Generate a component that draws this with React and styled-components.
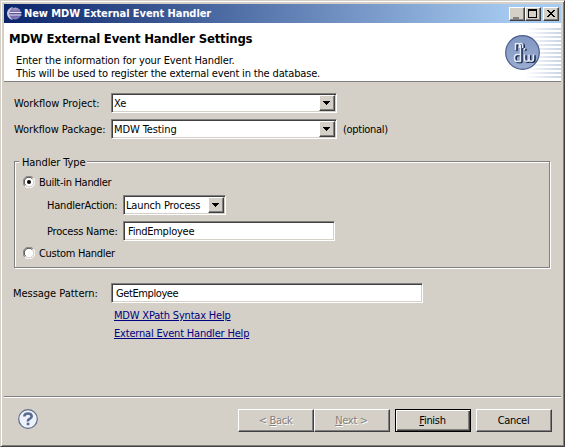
import React from "react";
import styled, { createGlobalStyle, css } from "styled-components";

const face = "#d4d0c8";

const GlobalStyle = createGlobalStyle`
  *, *::before, *::after { box-sizing: border-box; }
  body {
    margin: 0;
    overflow: hidden;
    background: ${face};
    color: #000;
    font: 11px/14px "DejaVu Sans Condensed", "DejaVu Sans", sans-serif;
  }
`;

const Window = styled.div`
  width: 565px;
  height: 447px;
  padding: 2px;
  display: flex;
  flex-direction: column;
  border: 1px solid;
  border-color: ${face} #404040 #404040 ${face};
  box-shadow: inset 1px 1px #fff, inset -1px -1px #808080;
  background: ${face};
`;

const TitleBar = styled.header`
  display: flex;
  align-items: center;
  height: 19px;
  margin: 1px 1px 0;
  padding: 0 2px 0 3px;
  background: linear-gradient(90deg, #0a246a, #a6caf0 92%);
`;

const Text = styled.span`
  display: block;
  white-space: pre;
  letter-spacing: ${(p) => p.$track || 0}px;
`;

const TitleText = styled(Text)`
  flex: 1;
  margin-left: 2px;
  color: #fff;
  font-weight: bold;
`;

const raised = css`
  border: 1px solid;
  border-color: #fff #404040 #404040 #fff;
  box-shadow: inset -1px -1px #808080;
  background: ${face};
`;

const CaptionButton = styled.button`
  ${raised}
  display: flex;
  width: 16px;
  height: 14px;
  padding: 0;
  margin-left: ${(p) => (p.$gap ? 2 : 0)}px;
  svg { display: block; }
`;

const Banner = styled.section`
  display: flex;
  justify-content: space-between;
  height: 59px;
  margin: 0 1px;
  background: #fff;
  border-bottom: 1px solid #808080;
`;

const BannerCopy = styled.div`
  padding: 8px 0 0 5px;
`;

const Heading = styled.h1`
  margin: 0 0 7px;
  font-size: 13px;
  line-height: 16px;
  font-weight: bold;
`;

const Description = styled.div`
  padding-left: 7px;
  line-height: 13px;
`;

const Form = styled.main`
  flex: 1;
  padding: 11px 11px 0 10px;
`;

const Row = styled.div`
  display: flex;
  align-items: center;
  height: 20px;
  margin-bottom: ${(p) => p.$after || 0}px;
`;

const Label = styled.label`
  width: ${(p) => p.$width}px;
  padding: 2px 0 0 ${(p) => p.$inset || 0}px;
  flex: none;
`;

const sunken = css`
  border: 1px solid;
  border-color: #808080 #fff #fff #808080;
  box-shadow: inset 1px 1px #404040, inset -1px -1px ${face};
  background-color: #fff;
`;

const Select = styled.div`
  ${sunken}
  display: flex;
  align-items: center;
  justify-content: space-between;
  width: ${(p) => p.$width}px;
  height: 20px;
  padding: 1px 1px 1px 2px;
  ${Text} { padding-top: 2px; }
`;

const DropButton = styled.span`
  ${raised}
  display: flex;
  align-items: center;
  justify-content: center;
  width: 16px;
  height: 16px;
  padding: 0 1px 1px 0;
`;

const Field = styled.div`
  ${sunken}
  display: flex;
  align-items: center;
  width: ${(p) => p.$width}px;
  height: 20px;
  padding: 1px 4px 0;
`;

const Hint = styled.div`
  margin-left: 6px;
  padding-top: 2px;
`;

const Group = styled.fieldset`
  margin: 0 1px 15px;
  height: 114px;
  min-width: 0;
  padding: 0 0 0 8px;
  border: 1px solid #808080;
  box-shadow: 1px 1px #fff, inset 1px 1px #fff;
`;

const Legend = styled.legend`
  height: 14px;
  margin-left: -4px;
  padding: 2px 2px 0 3px;
  background: ${face};
`;

const RadioRow = styled.div`
  display: flex;
  align-items: center;
  gap: 4px;
  height: 14px;
  margin-top: ${(p) => p.$before || 0}px;
  ${Text} { padding-top: 1px; }
`;

const Nested = styled.div`
  padding: 6px 0 5px 24px;
`;

const Links = styled.nav`
  display: flex;
  flex-direction: column;
  align-items: flex-start;
  gap: 4px;
  padding: 6px 0 0 101px;
`;

const Link = styled.a`
  color: #000080;
  text-decoration: underline;
  text-underline-offset: 1px;
  white-space: pre;
  letter-spacing: ${(p) => p.$track || 0}px;
`;

const Footer = styled.footer`
  display: flex;
  align-items: flex-start;
  height: 48px;
  margin: 0 1px;
  padding: 12px 9px 0 14px;
  border-top: 1px solid #808080;
  box-shadow: inset 0 1px #fff;
`;

const Actions = styled.div`
  display: flex;
  gap: 5px;
  margin-left: auto;
`;

const Pair = styled.div`
  display: flex;
`;

const Button = styled.button`
  ${raised}
  width: 76px;
  height: 23px;
  padding: 0 1px 0 0;
  color: #000;
  font: inherit;
  letter-spacing: -0.3px;
  ${(p) => p.disabled && css`
    color: #808080;
    text-shadow: 1px 1px #fff;
  `}
  ${(p) => p.$primary && css`
    border-color: #000;
    box-shadow: inset 1px 1px #fff, inset -1px -1px #404040, inset -2px -2px #808080;
  `}
`;

const Arrow = () => (
  <DropButton>
    <svg width="7" height="4" shapeRendering="crispEdges">
      <path d="M0 0h7v1h-1v1h-1v1h-1v1h-1v-1h-1v-1h-1v-1h-1z" />
    </svg>
  </DropButton>
);

const Radio = ({ checked }) => (
  <svg width="12" height="12" viewBox="0 0 12 12">
    <circle cx="6" cy="6" r="5" fill="#fff" />
    <path d="M1.8 10.2A5.5 5.5 0 0 1 10.2 1.8" fill="none" stroke="#808080" />
    <path d="M10.2 1.8A5.5 5.5 0 0 1 1.8 10.2" fill="none" stroke="#fff" />
    <path d="M2.6 9.2A4.5 4.5 0 0 1 9.2 2.6" fill="none" stroke="#404040" />
    <path d="M9.4 3A4.5 4.5 0 0 1 3 9.4" fill="none" stroke={face} />
    {checked && <circle cx="6" cy="6" r="2" />}
  </svg>
);

const EclipseIcon = () => (
  <svg width="15" height="15" viewBox="0 0 15 15">
    <defs>
      <linearGradient id="orb" x1="0" x2="0" y1="0" y2="1">
        <stop stopColor="#b3a4ce" />
        <stop offset="0.5" stopColor="#5d559c" />
        <stop offset="1" stopColor="#8b82bb" />
      </linearGradient>
    </defs>
    <path d="M6 1C2.500 1.500 0 4.500 0 7.500S2.500 13.500 6 14C4 12 3 10 3 7.500S4 3 6 1Z" fill="#cfc4df" />
    <circle cx="8.200" cy="7.500" r="5.900" fill="url(#orb)" />
    <path d="M2.500 6.500h12M2.500 9h12" stroke="#e9e5f5" />
  </svg>
);

const stripes = [5, 9, 13, 17, 21, 25, 29, 33, 37, 41, 45, 49, 53];
const monogram =
  "M20.500 27v-7M20.500 21.500q2-2 4 0V25M24.500 21.500q1.500-1.800 3.200 0V25" +
  "M25.500 22V39M25.500 31.500h-3.500q-2.500 0-2.500 3.500t2.500 3.500h3.500" +
  "M29.500 31.500v4.500q0 2.300 2.300 2.300t2.300-2.300V31.500M34.100 36q0 2.300 2.200 2.300t2.200-2.300V31.500M29.500 25v2";

const Brand = () => (
  <svg width="66" height="58" viewBox="0 0 66 58">
    <defs>
      <linearGradient id="fade" gradientUnits="userSpaceOnUse" x1="30" x2="66" y1="0" y2="0">
        <stop stopColor="#c9d3e6" stopOpacity="0" />
        <stop offset="1" stopColor="#c9d3e6" />
      </linearGradient>
      <linearGradient id="disc" x1="0" x2="0" y1="0" y2="1">
        <stop stopColor="#8197c2" />
        <stop offset="1" stopColor="#9bacd0" />
      </linearGradient>
    </defs>
    {stripes.map((y) => (
      <rect key={y} x="30" y={y} width="36" height="2" fill="url(#fade)" />
    ))}
    <circle cx="27.500" cy="29.500" r="16.800" fill="url(#disc)" stroke="#4c5f8c" strokeWidth="1.200" />
    <g fill="none">
      <path d={monogram} stroke="#18264d" strokeWidth="1.900" transform="translate(1.300 .7)" />
      <path d={monogram} stroke="#e3eaf7" strokeWidth="1.500" />
    </g>
  </svg>
);

const HelpIcon = () => (
  <svg width="20" height="20" viewBox="0 0 20 20">
    <circle cx="10" cy="10" r="9.300" fill="#edf2fa" stroke="#5c6c8c" strokeWidth="1.200" />
    <path d="M6.300 7.500Q6.500 4.500 10 4.500T13.700 7.300Q13.700 9 11.700 9.900T10 12.400" fill="none" stroke="#596b91" strokeWidth="2.600" />
    <path d="M8.700 13.700h2.700v2.500H8.700z" fill="#596b91" />
  </svg>
);

export default function App() {
  return (
    <>
      <GlobalStyle />
      <Window>
        <TitleBar>
          <EclipseIcon />
          <TitleText $track={-0.07}>New MDW External Event Handler</TitleText>
          <CaptionButton aria-label="Minimize">
            <svg width="14" height="12"><path d="M3 9h6v2H3z" fill="#808080" /></svg>
          </CaptionButton>
          <CaptionButton aria-label="Maximize">
            <svg width="14" height="12" shapeRendering="crispEdges"><path d="M2 1h9v9H2zM3 3v6h7V3z" fillRule="evenodd" /></svg>
          </CaptionButton>
          <CaptionButton $gap aria-label="Close">
            <svg width="14" height="12" shapeRendering="crispEdges"><path d="M3 2h2v1h1v1h2V3h1V2h2v1h-1v1H9v1H8v1h1v1h1v1h1v1H9V8H8V7H6v1H5v1H3V8h1V7h1V6h1V5H5V4H4V3H3z" /></svg>
          </CaptionButton>
        </TitleBar>
        <Banner>
          <BannerCopy>
            <Heading><Text $track={-0.2}>MDW External Event Handler Settings</Text></Heading>
            <Description>
              <Text $track={-0.12}>Enter the information for your Event Handler.</Text>
              <Text $track={-0.165}>This will be used to register the external event in the database.</Text>
            </Description>
          </BannerCopy>
          <Brand />
        </Banner>
        <Form>
          <Row $after={6}>
            <Label $width={98} $inset={1}><Text>Workflow Project:</Text></Label>
            <Select $width={226}><Text>Xe</Text><Arrow /></Select>
          </Row>
          <Row $after={15}>
            <Label $width={98} $inset={1}><Text $track={-0.08}>Workflow Package:</Text></Label>
            <Select $width={226}><Text $track={-0.1}>MDW Testing</Text><Arrow /></Select>
            <Hint><Text $track={-0.3}>(optional)</Text></Hint>
          </Row>
          <Group>
            <Legend><Text $track={-0.1}>Handler Type</Text></Legend>
            <RadioRow $before={7}><Radio checked /><Text $track={-0.3}>Built-in Handler</Text></RadioRow>
            <Nested>
              <Row $after={6}>
                <Label $width={76}><Text $track={-0.2}>HandlerAction:</Text></Label>
                <Select $width={103}><Text $track={-0.15}>Launch Process</Text><Arrow /></Select>
              </Row>
              <Row>
                <Label $width={76}><Text $track={-0.2}>Process Name:</Text></Label>
                <Field $width={212}><Text $track={-0.25}>FindEmployee</Text></Field>
              </Row>
            </Nested>
            <RadioRow><Radio /><Text $track={-0.3}>Custom Handler</Text></RadioRow>
          </Group>
          <Row>
            <Label $width={98}><Text $track={-0.03}>Message Pattern:</Text></Label>
            <Field $width={312}><Text $track={-0.4}>GetEmployee</Text></Field>
          </Row>
          <Links>
            <Link $track={-0.19}>MDW XPath Syntax Help</Link>
            <Link $track={-0.19}>External Event Handler Help</Link>
          </Links>
        </Form>
        <Footer>
          <HelpIcon />
          <Actions>
            <Pair>
              <Button disabled>&lt; <u>B</u>ack</Button>
              <Button disabled><u>N</u>ext &gt;</Button>
            </Pair>
            <Button $primary><u>F</u>inish</Button>
            <Button>Cancel</Button>
          </Actions>
        </Footer>
      </Window>
    </>
  );
}
